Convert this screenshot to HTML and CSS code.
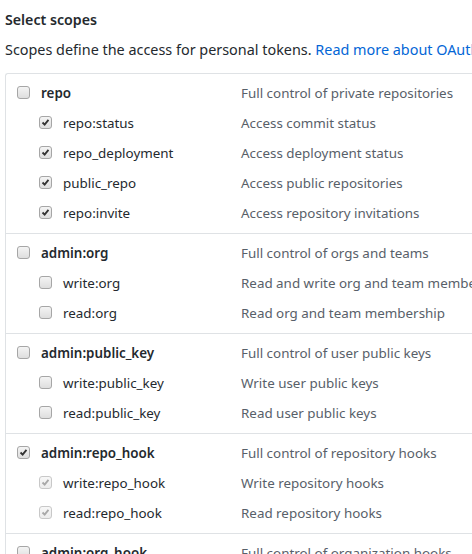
FILE: index.html
```html
<!DOCTYPE html>
<html>
<head>
<meta charset="utf-8">
<link rel="stylesheet" href="styles.css">
</head>
<body>
<h3 class="title">Select scopes</h3>
<p class="lead">Scopes define the access for personal tokens. <a class="link" href="#">Read more about OAuth scopes.</a></p>
<div class="scopes">
  <div class="group">
    <div class="row parent"><span class="name"><span class="cb"></span>repo</span><span class="desc">Full control of private repositories</span></div>
    <div class="row child"><span class="name"><span class="cb checked"><svg viewBox="0 0 13 13"><path d="M3 6.5 L5.5 9 L10 3.5" /></svg></span>repo:status</span><span class="desc">Access commit status</span></div>
    <div class="row child"><span class="name"><span class="cb checked"><svg viewBox="0 0 13 13"><path d="M3 6.5 L5.5 9 L10 3.5" /></svg></span>repo_deployment</span><span class="desc">Access deployment status</span></div>
    <div class="row child"><span class="name"><span class="cb checked"><svg viewBox="0 0 13 13"><path d="M3 6.5 L5.5 9 L10 3.5" /></svg></span>public_repo</span><span class="desc">Access public repositories</span></div>
    <div class="row child"><span class="name"><span class="cb checked"><svg viewBox="0 0 13 13"><path d="M3 6.5 L5.5 9 L10 3.5" /></svg></span>repo:invite</span><span class="desc">Access repository invitations</span></div>
  </div>
  <div class="group">
    <div class="row parent"><span class="name"><span class="cb"></span>admin:org</span><span class="desc">Full control of orgs and teams</span></div>
    <div class="row child"><span class="name"><span class="cb"></span>write:org</span><span class="desc">Read and write org and team membership</span></div>
    <div class="row child"><span class="name"><span class="cb"></span>read:org</span><span class="desc">Read org and team membership</span></div>
  </div>
  <div class="group">
    <div class="row parent"><span class="name"><span class="cb"></span>admin:public_key</span><span class="desc">Full control of user public keys</span></div>
    <div class="row child"><span class="name"><span class="cb"></span>write:public_key</span><span class="desc">Write user public keys</span></div>
    <div class="row child"><span class="name"><span class="cb"></span>read:public_key</span><span class="desc">Read user public keys</span></div>
  </div>
  <div class="group">
    <div class="row parent"><span class="name"><span class="cb checked"><svg viewBox="0 0 13 13"><path d="M3 6.5 L5.5 9 L10 3.5" /></svg></span>admin:repo_hook</span><span class="desc">Full control of repository hooks</span></div>
    <div class="row child"><span class="name"><span class="cb checked disabled"><svg viewBox="0 0 13 13"><path d="M3 6.5 L5.5 9 L10 3.5" /></svg></span>write:repo_hook</span><span class="desc">Write repository hooks</span></div>
    <div class="row child"><span class="name"><span class="cb checked disabled"><svg viewBox="0 0 13 13"><path d="M3 6.5 L5.5 9 L10 3.5" /></svg></span>read:repo_hook</span><span class="desc">Read repository hooks</span></div>
  </div>
  <div class="group">
    <div class="row parent"><span class="name"><span class="cb"></span>admin:org_hook</span><span class="desc">Full control of organization hooks</span></div>
  </div>
</div>
</body>
</html>
```
FILE: styles.css
```css
html, body {
  margin: 0;
  padding: 0;
  background: #fff;
  overflow: hidden;
}
body {
  padding: 0 0 0 5px;
  font-family: "Noto Sans", "Open Sans", sans-serif;
  font-size: 13.4px;
  color: #24292e;
  width: 700px;
}
.title {
  margin: 0;
  padding-top: 10px;
  line-height: 20px;
  font-size: 14.2px;
  font-weight: 600;
}
.lead {
  margin: 10px 0 0 0;
  line-height: 20px;
  font-size: 14.4px;
  white-space: nowrap;
}
.link {
  color: #0366d6;
  text-decoration: none;
}
.scopes {
  margin-top: 13px;
  border-top: 1px solid #dfe2e5;
  border-left: 1px solid #dfe2e5;
  border-top-left-radius: 3px;
}
.group {
  padding: 4px 0 5px;
  border-bottom: 1px solid #dfe2e5;
}
.row {
  display: flex;
  align-items: center;
  height: 30px;
  white-space: nowrap;
}
.name {
  display: flex;
  align-items: center;
  width: 235px;
  padding-left: 11px;
  box-sizing: border-box;
  flex-shrink: 0;
}
.parent .name {
  font-weight: 600;
}
.child .name {
  padding-left: 33px;
}
.desc {
  color: #586069;
}
.cb {
  display: inline-block;
  width: 13px;
  height: 13px;
  box-sizing: border-box;
  border: 1px solid #a6a6a6;
  border-radius: 3px;
  background: linear-gradient(#f4f4f4, #dedede);
  margin-right: 11px;
  position: relative;
  top: -1px;
  flex-shrink: 0;
}
.cb svg {
  display: block;
  width: 11px;
  height: 11px;
}
.cb path {
  fill: none;
  stroke: #333;
  stroke-width: 2.2;
}
.cb.disabled {
  border-color: #c8c8c8;
  background: linear-gradient(#f7f7f7, #ececec);
}
.cb.disabled path {
  stroke: #a8a8a8;
}
```
